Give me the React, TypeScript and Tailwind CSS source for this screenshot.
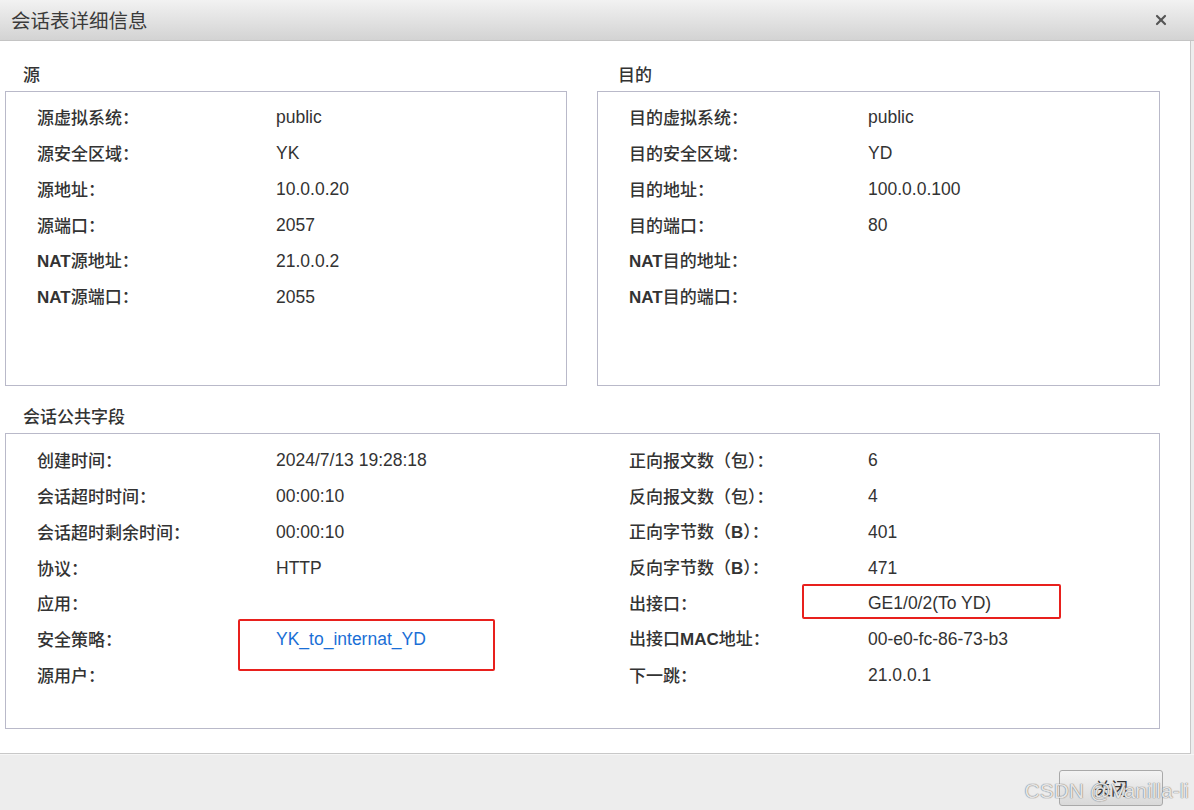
import React from "react";
import { X } from "lucide-react";

type Row = { label: React.ReactNode; value?: React.ReactNode };

const cjk = "font-['Noto_Sans_CJK_SC',sans-serif]";
const latin = "font-['Liberation_Sans','Noto_Sans_CJK_SC',sans-serif]";

const srcRows: Row[] = [
  { label: "源虚拟系统：", value: "public" },
  { label: "源安全区域：", value: "YK" },
  { label: "源地址：", value: "10.0.0.20" },
  { label: "源端口：", value: "2057" },
  { label: <><b className={latin}>NAT</b>源地址：</>, value: "21.0.0.2" },
  { label: <><b className={latin}>NAT</b>源端口：</>, value: "2055" },
];

const dstRows: Row[] = [
  { label: "目的虚拟系统：", value: "public" },
  { label: "目的安全区域：", value: "YD" },
  { label: "目的地址：", value: "100.0.0.100" },
  { label: "目的端口：", value: "80" },
  { label: <><b className={latin}>NAT</b>目的地址：</> },
  { label: <><b className={latin}>NAT</b>目的端口：</> },
];

const leftRows: Row[] = [
  { label: "创建时间：", value: "2024/7/13 19:28:18" },
  { label: "会话超时时间：", value: "00:00:10" },
  { label: "会话超时剩余时间：", value: "00:00:10" },
  { label: "协议：", value: "HTTP" },
  { label: "应用：" },
  {
    label: "安全策略：",
    value: (
      <span className="relative text-[#1a6fd6]">
        YK_to_internat_YD
        <span className="absolute left-[-38px] top-[-10px] h-[52px] w-[257px] rounded-[2px] border-2 border-[#e8201d]" />
      </span>
    ),
  },
  { label: "源用户：" },
];

const rightRows: Row[] = [
  { label: "正向报文数（包）：", value: "6" },
  { label: "反向报文数（包）：", value: "4" },
  { label: <>正向字节数（<b className={latin}>B</b>）：</>, value: "401" },
  { label: <>反向字节数（<b className={latin}>B</b>）：</>, value: "471" },
  {
    label: "出接口：",
    value: (
      <span className="relative">
        GE1/0/2(To YD)
        <span className="absolute left-[-66px] top-[-9px] h-[35px] w-[259px] rounded-[2px] border-2 border-[#e8201d]" />
      </span>
    ),
  },
  { label: <>出接口<b className={latin}>MAC</b>地址：</>, value: "00-e0-fc-86-73-b3" },
  { label: "下一跳：", value: "21.0.0.1" },
];

function Rows({ rows, h }: { rows: Row[]; h: string }) {
  return (
    <div className="flex flex-col">
      {rows.map((r, i) => (
        <div key={i} className={`flex items-center ${h}`}>
          <div className={`w-[270px] shrink-0 pl-[31px] text-[17px] font-medium text-[#333] ${cjk}`}>{r.label}</div>
          <div className={`pt-[1px] text-[17.5px] text-[#333] ${latin}`}>{r.value}</div>
        </div>
      ))}
    </div>
  );
}

function Heading({ children, pl }: { children: React.ReactNode; pl: string }) {
  return (
    <div className={`flex h-[34px] items-center ${pl} text-[17px] font-medium text-[#333] ${cjk}`}>{children}</div>
  );
}

export default function App() {
  return (
    <div className="relative flex h-[810px] w-[1194px] flex-col overflow-hidden bg-[#ededed]">
      {/* title bar */}
      <div className="flex h-[41px] shrink-0 items-center justify-between border-b border-[#c4c4c4] bg-gradient-to-b from-[#f2f2f2] to-[#d3d3d3] pl-[11px] pr-[25px]">
        <span className={`text-[19.5px] text-[#3a3a3a] ${cjk}`}>会话表详细信息</span>
        <X className="h-[16px] w-[16px] text-[#555]" strokeWidth={3.2} />
      </div>

      {/* content */}
      <div className="flex h-[713px] w-[1191px] shrink-0 flex-col border-r border-b border-[#c8c8c8] bg-white pl-[5px] pt-[16px]">
        <div className="flex w-[1155px] gap-[30px]">
          <div className="flex w-[562px] flex-col">
            <Heading pl="pl-[18px]">源</Heading>
            <div className="h-[295px] border border-[#b9b9c9] pt-[7px]">
              <Rows rows={srcRows} h="h-[36px]" />
            </div>
          </div>
          <div className="flex w-[563px] flex-col">
            <Heading pl="pl-[21px]">目的</Heading>
            <div className="h-[295px] border border-[#b9b9c9] pt-[7px]">
              <Rows rows={dstRows} h="h-[36px]" />
            </div>
          </div>
        </div>

        <div className="mt-[13px] w-[1155px]">
          <Heading pl="pl-[18px]">会话公共字段</Heading>
          <div className="grid h-[296px] grid-cols-[592px_1fr] border border-[#b9b9c9] pt-[8px]">
            <Rows rows={leftRows} h="h-[35.8px]" />
            <Rows rows={rightRows} h="h-[35.8px]" />
          </div>
        </div>
      </div>

      {/* footer */}
      <div className="flex flex-1 items-start justify-end border-t border-[#f6f6f6] pr-[31px] pt-[15px]">
        <button
          className={`flex h-[36px] w-[104px] items-center justify-center rounded-[3px] border border-[#a9a9a9] bg-gradient-to-b from-[#f3f3f3] to-[#d9d9d9] text-[17px] text-[#333] ${cjk}`}
        >
          关闭
        </button>
      </div>

      {/* watermark */}
      <div
        className={`pointer-events-none absolute bottom-[4px] right-[5px] text-[21px] text-white/80 ${latin}`}
        style={{ textShadow: "0 0 1px #777, 0 0 1px #777" }}
      >
        CSDN @Vanilla-li
      </div>
    </div>
  );
}
